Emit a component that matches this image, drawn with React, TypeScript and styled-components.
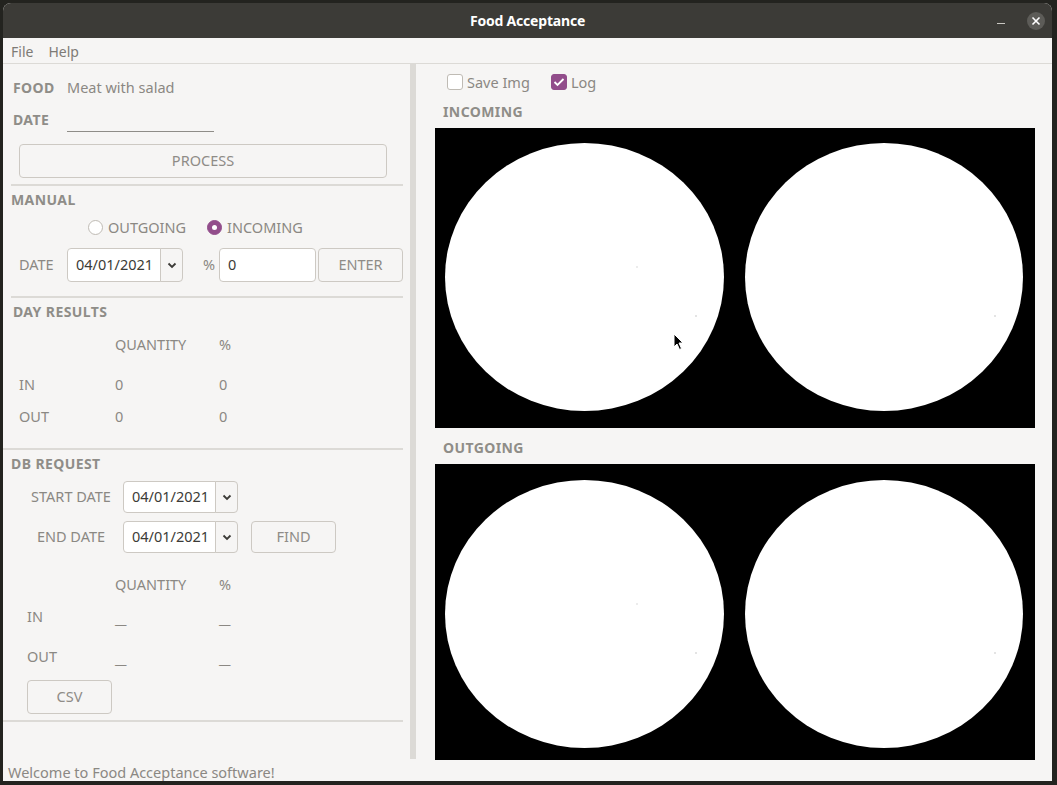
import React from "react";
import styled, { createGlobalStyle } from "styled-components";

const Global = createGlobalStyle`
  html, body { margin: 0; padding: 0; background: #2a2a28; }
  body { font-family: "Noto Sans", "DejaVu Sans", sans-serif; font-size: 14.5px; }
  * { box-sizing: border-box; }
`;

const Desktop = styled.div`
  width: 1057px;
  height: 785px;
  padding: 3px 5px 4px 3px;
  background: #23231f;
`;

const Window = styled.div`
  width: 1049px;
  height: 778px;
  display: flex;
  flex-direction: column;
  background: #f6f5f4;
  border-radius: 8px 8px 0 0;
  overflow: hidden;
`;

const TitleBar = styled.div`
  height: 35px;
  flex: none;
  background: #3c3b37;
  display: grid;
  grid-template-columns: 1fr auto 1fr;
  align-items: center;
  color: #ffffff;
`;

const Title = styled.div`
  grid-column: 2;
  font-weight: 700;
  font-size: 14px;
  letter-spacing: -0.2px;
`;

const WinButtons = styled.div`
  grid-column: 3;
  justify-self: end;
  display: flex;
  align-items: center;
  gap: 22px;
  padding-right: 7px;
`;

const MinBtn = styled.div`
  width: 8px;
  height: 1px;
  background: #c9c7c2;
  margin-top: 6px;
`;

const CloseBtn = styled.div`
  width: 18px;
  height: 18px;
  border-radius: 50%;
  background: #5d5c58;
  display: flex;
  align-items: center;
  justify-content: center;
`;

const MenuBar = styled.div`
  height: 26px;
  flex: none;
  display: flex;
  align-items: center;
  gap: 15px;
  padding-left: 8px;
  padding-top: 1px;
  border-bottom: 1px solid #dcdad6;
  color: #7e7b76;
  font-size: 14px;
`;

const Main = styled.div`
  height: 695px;
  flex: none;
  display: flex;
`;

const LeftPanel = styled.div`
  width: 402px;
  flex: none;
  display: flex;
  flex-direction: column;
`;

const Splitter = styled.div`
  width: 11px;
  flex: none;
  display: flex;
  justify-content: flex-end;
  background: #f6f5f4;
`;

const SplitBar = styled.div`
  width: 6px;
  height: 100%;
  background: #dcdad6;
`;

const RightPanel = styled.div`
  flex: 1;
  display: flex;
  flex-direction: column;
  padding-left: 19px;
`;

const Row = styled.div<{ $h: number; $mt: number; $pl?: number }>`
  height: ${(p) => p.$h}px;
  margin-top: ${(p) => p.$mt}px;
  padding-left: ${(p) => p.$pl ?? 0}px;
  display: flex;
  align-items: center;
  flex: none;
`;

const Cell = styled.div<{ $x: number }>`
  flex: none;
  width: ${(p) => p.$x}px;
  margin-bottom: 2px;
  color: #8b8883;
  font-size: 14.5px;
  white-space: nowrap;
`;

const Bold = styled.div<{ $w?: number }>`
  font-weight: 700;
  font-size: 14px;
  color: #8f8d88;
  letter-spacing: 0.4px;
  margin-bottom: 2px;
  width: ${(p) => (p.$w ? `${p.$w}px` : "auto")};
  flex: none;
  white-space: nowrap;
`;

const Text = styled.span`
  color: #8b8883;
  font-size: 14.5px;
  margin-bottom: 2px;
  white-space: nowrap;
`;

const Underline = styled.div`
  width: 147px;
  height: 20px;
  border-bottom: 1px solid #8f8d88;
  margin-top: 4px;
`;

const Button = styled.button<{ $w: number; $ml?: number; $h?: number }>`
  width: ${(p) => p.$w}px;
  height: ${(p) => p.$h ?? 34}px;
  margin-left: ${(p) => p.$ml ?? 0}px;
  flex: none;
  border: 1px solid #cdc9c3;
  border-radius: 4px;
  background: #f6f5f4;
  color: #8f8c87;
  font-family: "Noto Sans", sans-serif;
  font-size: 14.5px;
  padding: 0 0 2px 0;
`;

const Separator = styled.div<{ $mt: number; $ml: number }>`
  height: 2px;
  margin-top: ${(p) => p.$mt}px;
  margin-left: ${(p) => p.$ml}px;
  width: ${(p) => 400 - p.$ml}px;
  background: #dcdad6;
  flex: none;
`;

const Radio = styled.span<{ $on?: boolean }>`
  width: 15px;
  height: 15px;
  border-radius: 50%;
  flex: none;
  display: inline-flex;
  align-items: center;
  justify-content: center;
  border: 1px solid ${(p) => (p.$on ? "#924d8b" : "#bfbbb4")};
  background: ${(p) => (p.$on ? "#924d8b" : "#ffffff")};
  margin-right: 5px;
  &::after {
    content: "";
    width: 5px;
    height: 5px;
    border-radius: 50%;
    background: ${(p) => (p.$on ? "#ffffff" : "transparent")};
  }
`;

const Option = styled.div<{ $x: number }>`
  position: absolute;
  left: ${(p) => p.$x}px;
  display: flex;
  align-items: center;
  color: #8b8883;
`;

const RadioRow = styled(Row)`
  position: relative;
`;

const Input = styled.div<{ $w: number; $h: number }>`
  width: ${(p) => p.$w}px;
  height: ${(p) => p.$h}px;
  flex: none;
  background: #ffffff;
  border: 1px solid #cdc9c3;
  border-radius: 4px 0 0 4px;
  display: flex;
  align-items: center;
  padding: 0 0 2px 8px;
  color: #3c3b37;
  font-size: 14.5px;
`;

const PlainInput = styled(Input)`
  border-radius: 4px;
`;

const Drop = styled.div<{ $h: number }>`
  width: 23px;
  height: ${(p) => p.$h}px;
  flex: none;
  margin-left: -1px;
  border: 1px solid #cdc9c3;
  border-radius: 0 4px 4px 0;
  background: #f6f5f4;
  display: flex;
  align-items: center;
  justify-content: center;
`;

const LabelCol = styled.div<{ $w: number; $align?: string }>`
  width: ${(p) => p.$w}px;
  flex: none;
  margin-bottom: 2px;
  text-align: ${(p) => p.$align ?? "left"};
  color: #8b8883;
  font-size: 14.5px;
  white-space: nowrap;
`;

const PctLabel = styled(LabelCol)`
  padding-right: 4px;
`;

const Dash = styled.span`
  color: #8b8883;
  font-size: 14px;
  position: relative;
  top: 2px;
  letter-spacing: -1px;
`;

const Status = styled.div`
  flex: 1;
  display: flex;
  align-items: center;
  padding-left: 5px;
  padding-top: 3px;
  color: #8b8883;
  font-size: 14.5px;
`;

const CheckRow = styled.div`
  display: flex;
  align-items: center;
  height: 20px;
  margin-top: 8px;
  padding-left: 12px;
`;

const CheckItem = styled.div<{ $w: number }>`
  width: ${(p) => p.$w}px;
  display: flex;
  align-items: center;
  gap: 4px;
  color: #8b8883;
  font-size: 14.5px;
`;

const Box = styled.span<{ $on?: boolean }>`
  width: 16px;
  height: 16px;
  border-radius: 3px;
  display: inline-flex;
  align-items: center;
  justify-content: center;
  border: 1px solid ${(p) => (p.$on ? "#924d8b" : "#bfbbb4")};
  background: ${(p) => (p.$on ? "#924d8b" : "#ffffff")};
`;

const SectionTitle = styled(Bold)<{ $mt: number }>`
  height: 20px;
  line-height: 20px;
  padding-left: 8px;
  margin-top: ${(p) => p.$mt}px;
  margin-bottom: 0;
`;

const Frame = styled.div<{ $h: number }>`
  position: relative;
  width: 600px;
  height: ${(p) => p.$h}px;
  margin-top: 6px;
  background: #000000;
  flex: none;
`;

const Cursor = styled.svg`
  position: absolute;
  left: 238px;
  top: 205px;
`;

const Chevron = () => (
  <svg width="10" height="7" viewBox="0 0 10 7">
    <path d="M1.5 1.5 L5 5 L8.5 1.5" fill="none" stroke="#3c3b37" strokeWidth="1.8" />
  </svg>
);

const Plates = ({ h, cy }: { h: number; cy: number }) => (
  <svg width="600" height={h} viewBox={`0 0 600 ${h}`}>
    <ellipse cx="149.5" cy={cy} rx="139.5" ry="134" fill="#ffffff" />
    <ellipse cx="449" cy={cy} rx="139" ry="134" fill="#ffffff" />
    <rect x="201" y={cy - 11} width="2" height="2" fill="#ececec" />
    <rect x="260" y={cy + 38} width="2" height="2" fill="#e4e4e4" />
    <rect x="559" y={cy + 38} width="2" height="2" fill="#e4e4e4" />
  </svg>
);

export default function App() {
  return (
    <>
      <Global />
      <Desktop>
        <Window>
          <TitleBar>
            <Title>Food Acceptance</Title>
            <WinButtons>
              <MinBtn />
              <CloseBtn>
                <svg width="10" height="10" viewBox="0 0 10 10">
                  <path d="M1.5 1.5 L8.5 8.5 M8.5 1.5 L1.5 8.5" stroke="#ffffff" strokeWidth="1.6" />
                </svg>
              </CloseBtn>
            </WinButtons>
          </TitleBar>
          <MenuBar>
            <span>File</span>
            <span>Help</span>
          </MenuBar>
          <Main>
            <LeftPanel>
              <Row $h={24} $mt={12} $pl={10}>
                <Bold $w={54}>FOOD</Bold>
                <Text>Meat with salad</Text>
              </Row>
              <Row $h={24} $mt={8} $pl={10}>
                <Bold $w={54}>DATE</Bold>
                <Underline />
              </Row>
              <Row $h={34} $mt={12} $pl={16}>
                <Button $w={368}>PROCESS</Button>
              </Row>
              <Separator $mt={6} $ml={8} />

              <Row $h={20} $mt={4} $pl={8}>
                <Bold>MANUAL</Bold>
              </Row>
              <RadioRow $h={22} $mt={6}>
                <Option $x={85}>
                  <Radio />
                  OUTGOING
                </Option>
                <Option $x={204}>
                  <Radio $on />
                  INCOMING
                </Option>
              </RadioRow>
              <Row $h={34} $mt={10} $pl={16}>
                <LabelCol $w={48}>DATE</LabelCol>
                <Input $w={94} $h={34}>04/01/2021</Input>
                <Drop $h={34}>
                  <Chevron />
                </Drop>
                <PctLabel $w={36} $align="right">%</PctLabel>
                <PlainInput $w={97} $h={34}>0</PlainInput>
                <Button $w={85} $ml={2}>ENTER</Button>
              </Row>
              <Separator $mt={14} $ml={8} />

              <Row $h={20} $mt={4} $pl={10}>
                <Bold>DAY RESULTS</Bold>
              </Row>
              <Row $h={20} $mt={13} $pl={112}>
                <Cell $x={104}>QUANTITY</Cell>
                <Cell $x={40}>%</Cell>
              </Row>
              <Row $h={20} $mt={20} $pl={16}>
                <Cell $x={96}>IN</Cell>
                <Cell $x={104}>0</Cell>
                <Cell $x={40}>0</Cell>
              </Row>
              <Row $h={20} $mt={12} $pl={16}>
                <Cell $x={96}>OUT</Cell>
                <Cell $x={104}>0</Cell>
                <Cell $x={40}>0</Cell>
              </Row>
              <Separator $mt={21} $ml={0} />

              <Row $h={20} $mt={4} $pl={8}>
                <Bold>DB REQUEST</Bold>
              </Row>
              <Row $h={32} $mt={7} $pl={16}>
                <LabelCol $w={104} $align="center">START DATE</LabelCol>
                <Input $w={93} $h={32}>04/01/2021</Input>
                <Drop $h={32}>
                  <Chevron />
                </Drop>
              </Row>
              <Row $h={32} $mt={8} $pl={16}>
                <LabelCol $w={104} $align="center">END DATE</LabelCol>
                <Input $w={93} $h={32}>04/01/2021</Input>
                <Drop $h={32}>
                  <Chevron />
                </Drop>
                <Button $w={85} $ml={13} $h={32}>FIND</Button>
              </Row>
              <Row $h={20} $mt={22} $pl={112}>
                <Cell $x={104}>QUANTITY</Cell>
                <Cell $x={40}>%</Cell>
              </Row>
              <Row $h={20} $mt={12} $pl={24}>
                <Cell $x={88}>IN</Cell>
                <Cell $x={104}>
                  <Dash>__</Dash>
                </Cell>
                <Cell $x={40}>
                  <Dash>__</Dash>
                </Cell>
              </Row>
              <Row $h={20} $mt={20} $pl={24}>
                <Cell $x={88}>OUT</Cell>
                <Cell $x={104}>
                  <Dash>__</Dash>
                </Cell>
                <Cell $x={40}>
                  <Dash>__</Dash>
                </Cell>
              </Row>
              <Row $h={34} $mt={13} $pl={24}>
                <Button $w={85}>CSV</Button>
              </Row>
              <Separator $mt={6} $ml={0} />
            </LeftPanel>
            <Splitter>
              <SplitBar />
            </Splitter>
            <RightPanel>
              <CheckRow>
                <CheckItem $w={104}>
                  <Box />
                  Save Img
                </CheckItem>
                <CheckItem $w={60}>
                  <Box $on>
                    <svg width="12" height="10" viewBox="0 0 12 10">
                      <path d="M1.5 5 L4.5 8 L10.5 2" fill="none" stroke="#ffffff" strokeWidth="1.8" />
                    </svg>
                  </Box>
                  Log
                </CheckItem>
              </CheckRow>
              <SectionTitle $mt={10}>INCOMING</SectionTitle>
              <Frame $h={300}>
                <Plates h={300} cy={149} />
                <Cursor width="12" height="18" viewBox="0 0 12 18">
                  <path d="M1 1 L1 14 L4 11 L6.5 16.5 L8.5 15.5 L6 10 L10 10 Z" fill="#000000" stroke="#ffffff" strokeWidth="1" />
                </Cursor>
              </Frame>
              <SectionTitle $mt={10}>OUTGOING</SectionTitle>
              <Frame $h={296}>
                <Plates h={296} cy={150} />
              </Frame>
            </RightPanel>
          </Main>
          <Status>Welcome to Food Acceptance software!</Status>
        </Window>
      </Desktop>
    </>
  );
}
